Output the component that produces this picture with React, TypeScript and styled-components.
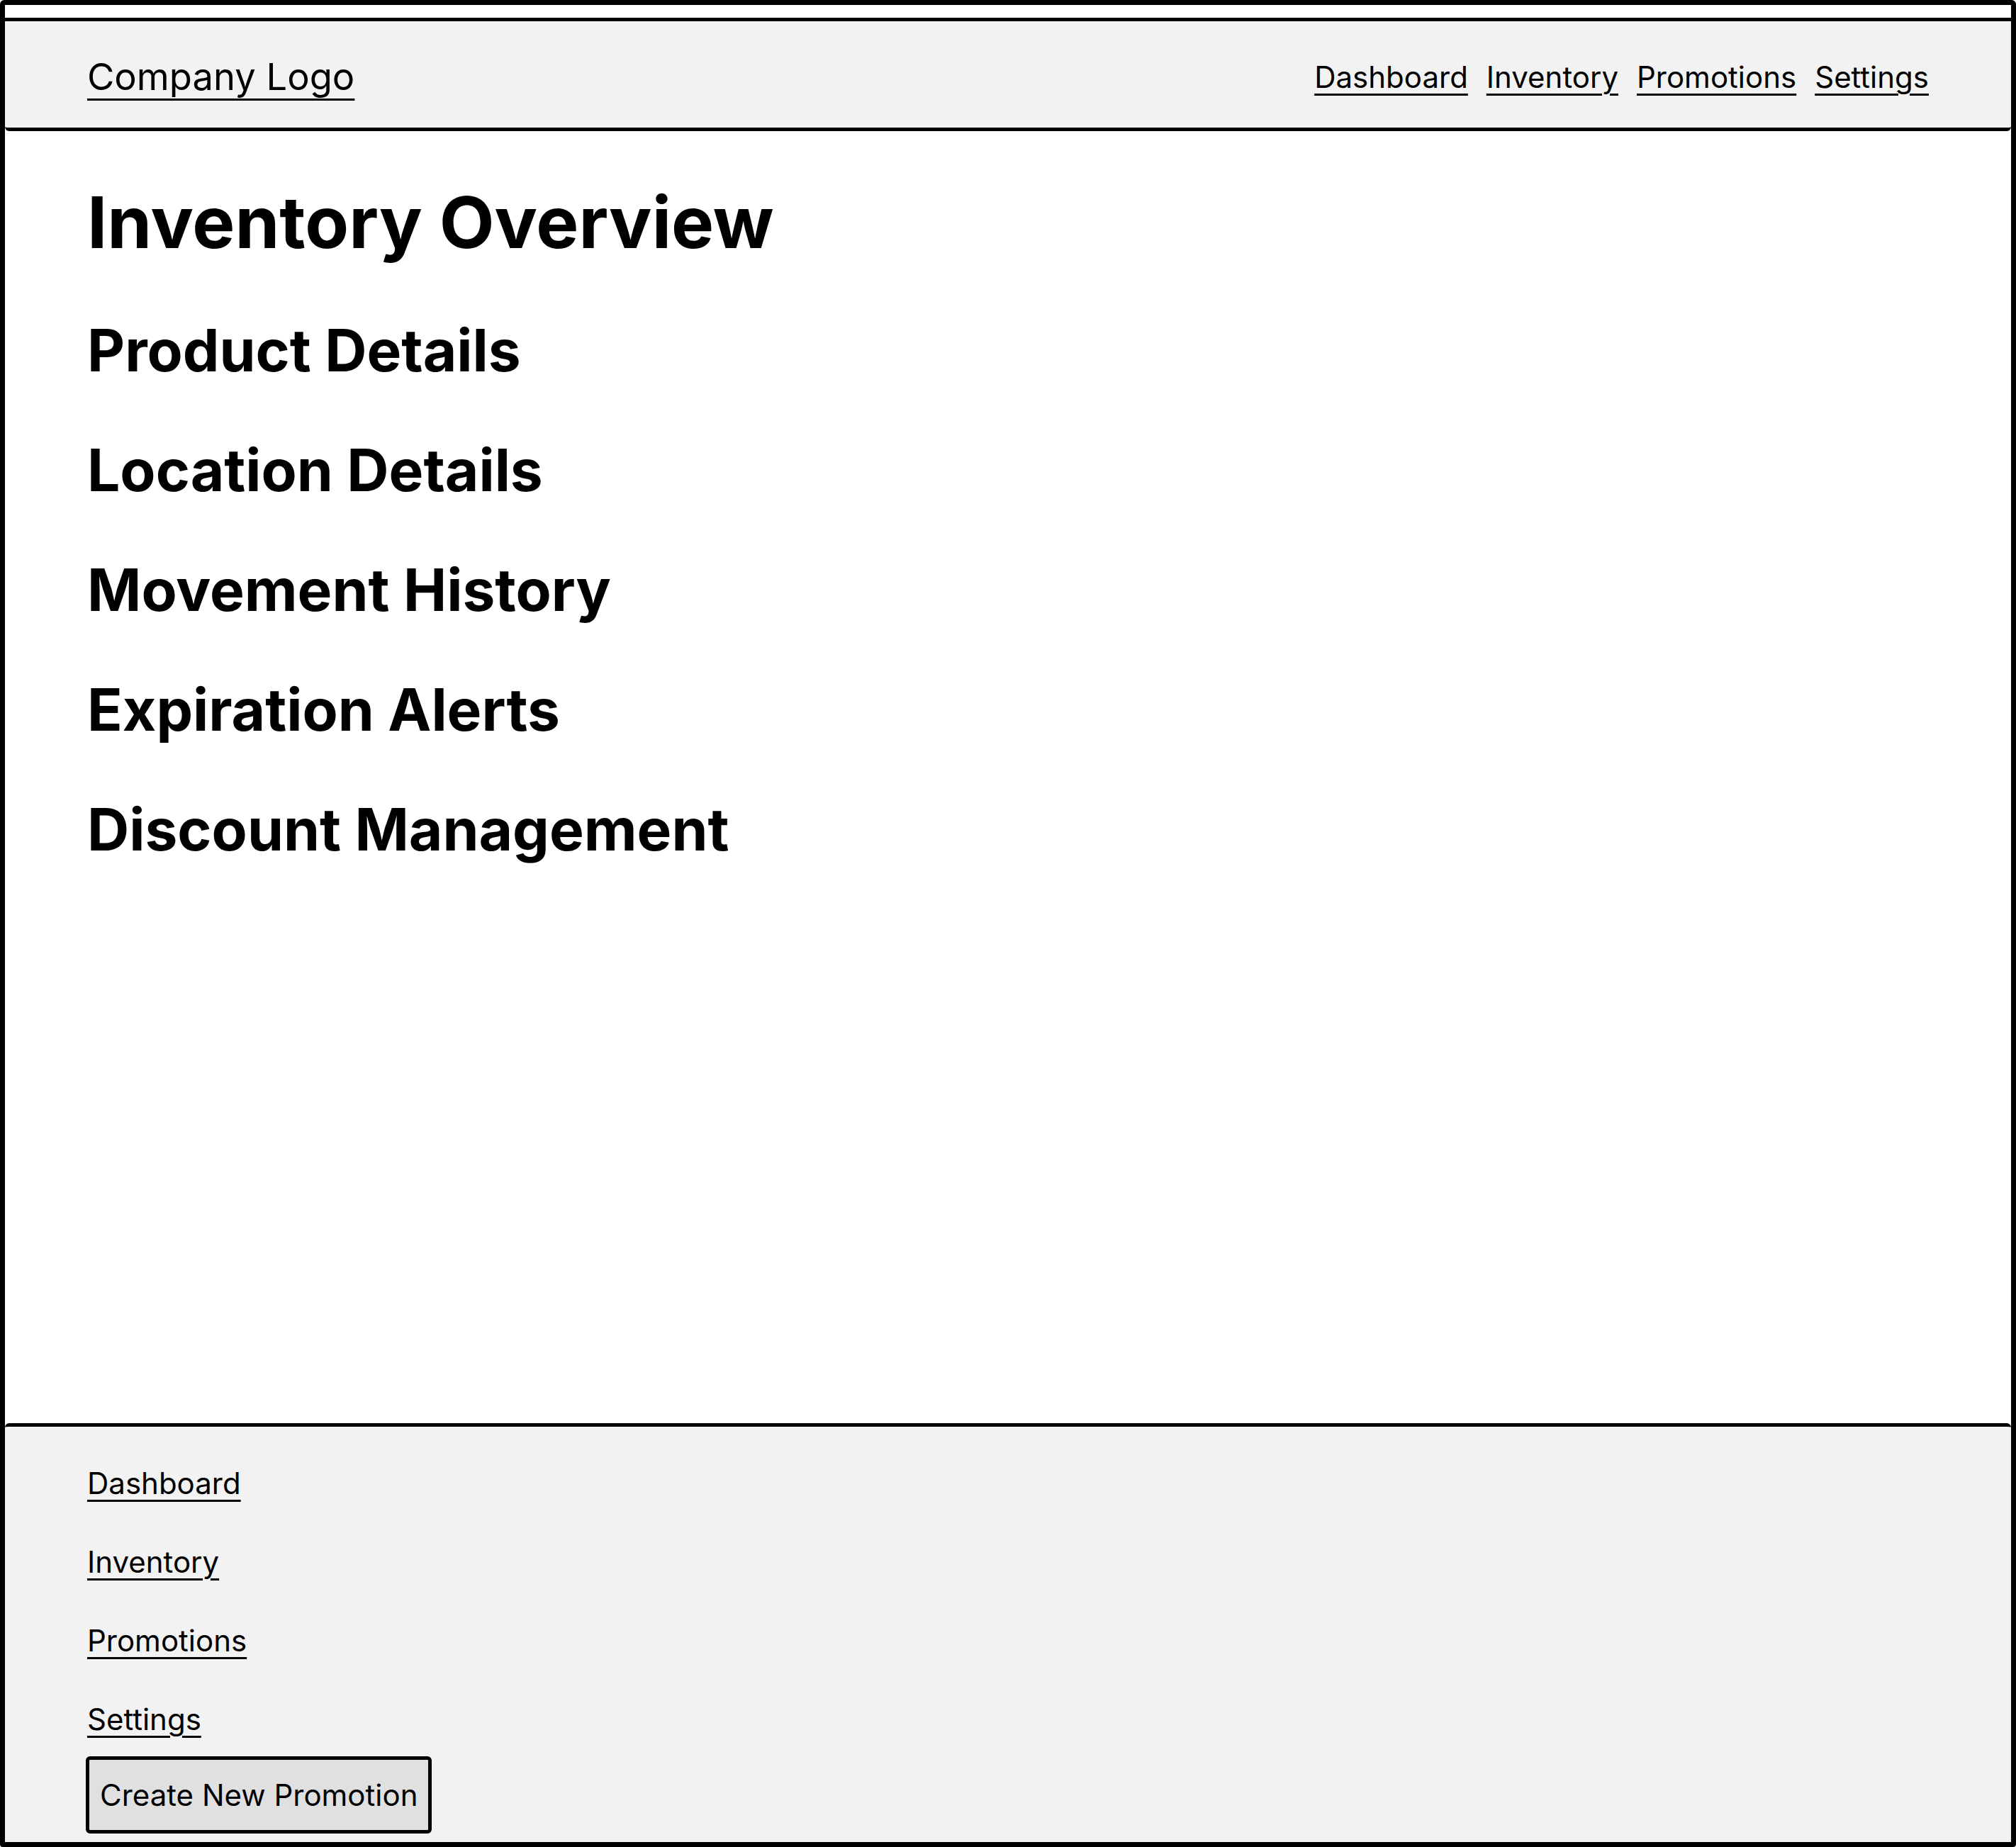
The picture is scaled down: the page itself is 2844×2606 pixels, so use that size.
import React from "react";
import styled, { createGlobalStyle } from "styled-components";

const GlobalStyle = createGlobalStyle`
  html, body {
    margin: 0;
    padding: 0;
    background: #ffffff;
  }
  body {
    font-family: Inter, "Noto Sans", "Liberation Sans", sans-serif;
    color: #000;
  }
  * { box-sizing: border-box; }
`;

const Frame = styled.div`
  width: 2844px;
  height: 2606px;
  border: 7px solid #000;
  border-radius: 6px 6px 4px 4px;
  background: #fff;
  display: flex;
  flex-direction: column;
  overflow: hidden;
`;

const Header = styled.header`
  margin-top: 18px;
  height: 160px;
  background: #f2f2f2;
  border-top: 5px solid #000;
  border-bottom: 5px solid #000;
  border-radius: 0 0 6px 6px;
  padding: 7px 116px 0 116px;
  display: flex;
  align-items: center;
  justify-content: space-between;
`;

const Logo = styled.a`
  font-size: 52.5px;
  line-height: 63px;
  color: #000;
  text-decoration: underline;
  text-decoration-thickness: 3px;
  text-underline-offset: 12px;
`;

const Nav = styled.nav`
  display: flex;
  align-items: center;
  gap: 26px;
`;

const NavLink = styled.a`
  font-size: 42px;
  line-height: 51px;
  color: #000;
  text-decoration: underline;
  text-decoration-thickness: 3px;
  text-underline-offset: 8px;
`;

const Main = styled.main`
  flex: 1;
  padding: 68px 116px 0 116px;
  display: flex;
  flex-direction: column;
  gap: 72px;
`;

const Title = styled.h1`
  margin: 0;
  font-size: 101px;
  line-height: 121px;
  font-weight: 700;
`;

const Section = styled.h2`
  margin: 0;
  font-size: 82px;
  line-height: 97px;
  font-weight: 700;
`;

const Footer = styled.footer`
  height: 591px;
  background: #f2f2f2;
  border-top: 5px solid #000;
  border-radius: 6px 6px 0 0;
  padding: 54px 116px 0 116px;
  display: flex;
  flex-direction: column;
  align-items: flex-start;
`;

const FooterNav = styled.nav`
  display: flex;
  flex-direction: column;
  align-items: flex-start;
  gap: 60px;
`;

const Button = styled.button`
  margin-top: 27px;
  margin-left: -2px;
  font-family: Inter, "Noto Sans", "Liberation Sans", sans-serif;
  font-size: 42px;
  line-height: 51px;
  color: #000;
  background: #e0e0e0;
  border: 5px solid #000;
  border-radius: 6px;
  padding: 24px 15px;
  cursor: pointer;
`;

const navItems = ["Dashboard", "Inventory", "Promotions", "Settings"];
const sections = [
  "Product Details",
  "Location Details",
  "Movement History",
  "Expiration Alerts",
  "Discount Management",
];

export default function App() {
  return (
    <>
      <GlobalStyle />
      <Frame>
        <Header>
          <Logo href="#">Company Logo</Logo>
          <Nav>
            {navItems.map((n) => (
              <NavLink key={n} href="#">
                {n}
              </NavLink>
            ))}
          </Nav>
        </Header>
        <Main>
          <Title>Inventory Overview</Title>
          {sections.map((s) => (
            <Section key={s}>{s}</Section>
          ))}
        </Main>
        <Footer>
          <FooterNav>
            {navItems.map((n) => (
              <NavLink key={n} href="#">
                {n}
              </NavLink>
            ))}
          </FooterNav>
          <Button>Create New Promotion</Button>
        </Footer>
      </Frame>
    </>
  );
}
